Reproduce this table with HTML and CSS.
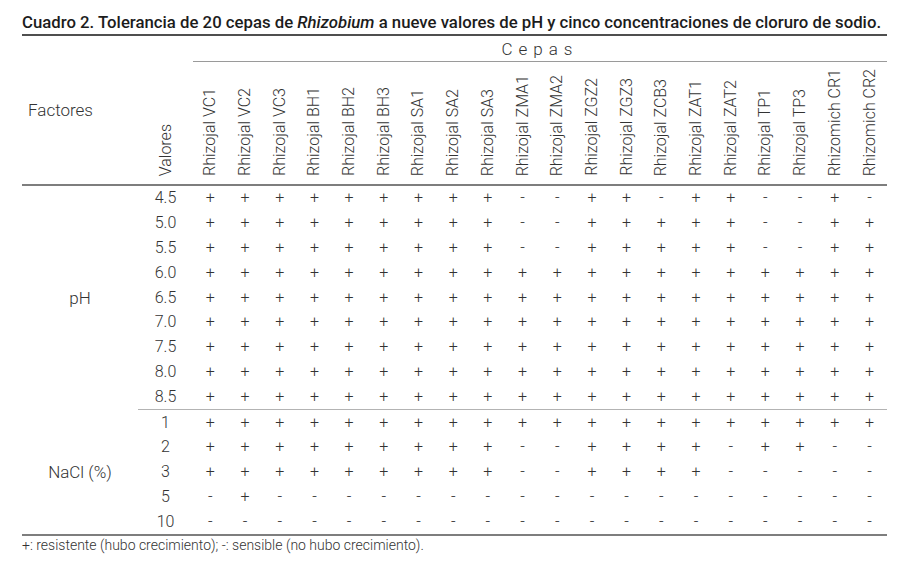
FILE: index.html
```html
<!DOCTYPE html>
<html lang="es">
<head>
<meta charset="utf-8">
<title>Cuadro 2</title>
<link rel="stylesheet" href="styles.css">
</head>
<body>
<div class="wrap">
  <div class="title">Cuadro 2. Tolerancia de 20 cepas de <em>Rhizobium</em> a nueve valores de pH y cinco concentraciones de cloruro de sodio.</div>
  <table class="tbl">
    <colgroup>
      <col class="c-fac"><col class="c-val">
      <col class="c-d"><col class="c-d"><col class="c-d"><col class="c-d"><col class="c-d">
      <col class="c-d"><col class="c-d"><col class="c-d"><col class="c-d"><col class="c-d">
      <col class="c-d"><col class="c-d"><col class="c-d"><col class="c-d"><col class="c-d">
      <col class="c-d"><col class="c-d"><col class="c-d"><col class="c-d"><col class="c-d">
    </colgroup>
    <thead>
      <tr class="h1">
        <th class="factores hb" rowspan="2">Factores</th>
        <th class="hb hv" rowspan="2"><span class="v">Valores</span></th>
        <th class="cepas" colspan="20">Cepas</th>
      </tr>
      <tr class="rot">
        <th class="hb hv"><span class="v">Rhizojal VC1</span></th>
        <th class="hb hv"><span class="v">Rhizojal VC2</span></th>
        <th class="hb hv"><span class="v">Rhizojal VC3</span></th>
        <th class="hb hv"><span class="v">Rhizojal BH1</span></th>
        <th class="hb hv"><span class="v">Rhizojal BH2</span></th>
        <th class="hb hv"><span class="v">Rhizojal BH3</span></th>
        <th class="hb hv"><span class="v">Rhizojal SA1</span></th>
        <th class="hb hv"><span class="v">Rhizojal SA2</span></th>
        <th class="hb hv"><span class="v">Rhizojal SA3</span></th>
        <th class="hb hv"><span class="v">Rhizojal ZMA1</span></th>
        <th class="hb hv"><span class="v">Rhizojal ZMA2</span></th>
        <th class="hb hv"><span class="v">Rhizojal ZGZ2</span></th>
        <th class="hb hv"><span class="v">Rhizojal ZGZ3</span></th>
        <th class="hb hv"><span class="v">Rhizojal ZCB3</span></th>
        <th class="hb hv"><span class="v">Rhizojal ZAT1</span></th>
        <th class="hb hv"><span class="v">Rhizojal ZAT2</span></th>
        <th class="hb hv"><span class="v">Rhizojal TP1</span></th>
        <th class="hb hv"><span class="v">Rhizojal TP3</span></th>
        <th class="hb hv"><span class="v">Rhizomich CR1</span></th>
        <th class="hb hv"><span class="v">Rhizomich CR2</span></th>
      </tr>
    </thead>
    <tbody>
      <tr><td class="fac" rowspan="9">pH</td><td>4.5</td><td>+</td><td>+</td><td>+</td><td>+</td><td>+</td><td>+</td><td>+</td><td>+</td><td>+</td><td>-</td><td>-</td><td>+</td><td>+</td><td>-</td><td>+</td><td>+</td><td>-</td><td>-</td><td>+</td><td>-</td></tr>
      <tr><td>5.0</td><td>+</td><td>+</td><td>+</td><td>+</td><td>+</td><td>+</td><td>+</td><td>+</td><td>+</td><td>-</td><td>-</td><td>+</td><td>+</td><td>+</td><td>+</td><td>+</td><td>-</td><td>-</td><td>+</td><td>+</td></tr>
      <tr><td>5.5</td><td>+</td><td>+</td><td>+</td><td>+</td><td>+</td><td>+</td><td>+</td><td>+</td><td>+</td><td>-</td><td>-</td><td>+</td><td>+</td><td>+</td><td>+</td><td>+</td><td>-</td><td>-</td><td>+</td><td>+</td></tr>
      <tr><td>6.0</td><td>+</td><td>+</td><td>+</td><td>+</td><td>+</td><td>+</td><td>+</td><td>+</td><td>+</td><td>+</td><td>+</td><td>+</td><td>+</td><td>+</td><td>+</td><td>+</td><td>+</td><td>+</td><td>+</td><td>+</td></tr>
      <tr><td>6.5</td><td>+</td><td>+</td><td>+</td><td>+</td><td>+</td><td>+</td><td>+</td><td>+</td><td>+</td><td>+</td><td>+</td><td>+</td><td>+</td><td>+</td><td>+</td><td>+</td><td>+</td><td>+</td><td>+</td><td>+</td></tr>
      <tr><td>7.0</td><td>+</td><td>+</td><td>+</td><td>+</td><td>+</td><td>+</td><td>+</td><td>+</td><td>+</td><td>+</td><td>+</td><td>+</td><td>+</td><td>+</td><td>+</td><td>+</td><td>+</td><td>+</td><td>+</td><td>+</td></tr>
      <tr><td>7.5</td><td>+</td><td>+</td><td>+</td><td>+</td><td>+</td><td>+</td><td>+</td><td>+</td><td>+</td><td>+</td><td>+</td><td>+</td><td>+</td><td>+</td><td>+</td><td>+</td><td>+</td><td>+</td><td>+</td><td>+</td></tr>
      <tr><td>8.0</td><td>+</td><td>+</td><td>+</td><td>+</td><td>+</td><td>+</td><td>+</td><td>+</td><td>+</td><td>+</td><td>+</td><td>+</td><td>+</td><td>+</td><td>+</td><td>+</td><td>+</td><td>+</td><td>+</td><td>+</td></tr>
      <tr><td>8.5</td><td>+</td><td>+</td><td>+</td><td>+</td><td>+</td><td>+</td><td>+</td><td>+</td><td>+</td><td>+</td><td>+</td><td>+</td><td>+</td><td>+</td><td>+</td><td>+</td><td>+</td><td>+</td><td>+</td><td>+</td></tr>
      <tr class="sep"><td class="fac" rowspan="5">NaCl (%)</td><td>1</td><td>+</td><td>+</td><td>+</td><td>+</td><td>+</td><td>+</td><td>+</td><td>+</td><td>+</td><td>+</td><td>+</td><td>+</td><td>+</td><td>+</td><td>+</td><td>+</td><td>+</td><td>+</td><td>+</td><td>+</td></tr>
      <tr><td>2</td><td>+</td><td>+</td><td>+</td><td>+</td><td>+</td><td>+</td><td>+</td><td>+</td><td>+</td><td>-</td><td>-</td><td>+</td><td>+</td><td>+</td><td>+</td><td>-</td><td>+</td><td>+</td><td>-</td><td>-</td></tr>
      <tr><td>3</td><td>+</td><td>+</td><td>+</td><td>+</td><td>+</td><td>+</td><td>+</td><td>+</td><td>+</td><td>-</td><td>-</td><td>+</td><td>+</td><td>+</td><td>+</td><td>-</td><td>-</td><td>-</td><td>-</td><td>-</td></tr>
      <tr><td>5</td><td>-</td><td>+</td><td>-</td><td>-</td><td>-</td><td>-</td><td>-</td><td>-</td><td>-</td><td>-</td><td>-</td><td>-</td><td>-</td><td>-</td><td>-</td><td>-</td><td>-</td><td>-</td><td>-</td><td>-</td></tr>
      <tr class="last"><td>10</td><td>-</td><td>-</td><td>-</td><td>-</td><td>-</td><td>-</td><td>-</td><td>-</td><td>-</td><td>-</td><td>-</td><td>-</td><td>-</td><td>-</td><td>-</td><td>-</td><td>-</td><td>-</td><td>-</td><td>-</td></tr>
    </tbody>
  </table>
  <p class="note">+: resistente (hubo crecimiento); -: sensible (no hubo crecimiento).</p>
</div>
</body>
</html>
```

FILE: styles.css
```css
html, body {
  margin: 0;
  padding: 0;
  background: #ffffff;
}

body {
  font-family: Roboto, "Liberation Sans", sans-serif;
  color: #333333;
}

.wrap {
  padding: 12px 13px 0 22px;
  width: 865px;
}

.title {
  font-size: 16.75px;
  font-weight: 500;
  line-height: 20px;
  color: #1c1c1c;
  padding-bottom: 2px;
  border-bottom: 2px solid #4f4f4f;
  white-space: nowrap;
}

.title em {
  font-style: italic;
}

.tbl {
  width: 865px;
  border-collapse: collapse;
  table-layout: fixed;
}

.c-fac { width: 116px; }
.c-val { width: 55px; }
.c-d { width: 34.7px; }

.tbl th,
.tbl td {
  padding: 0;
  font-weight: 300;
  color: #333333;
}

.h1 th {
  height: 25px;
}

.factores {
  text-align: left;
  padding-left: 6px !important;
  font-size: 17px;
  vertical-align: middle;
}

.cepas {
  font-size: 17px;
  letter-spacing: 6px;
  text-align: center;
  vertical-align: middle;
  border-bottom: 1.5px solid #9a9a9a;
}

.rot th {
  height: 118px;
}

.hv {
  vertical-align: bottom;
  text-align: center;
  padding-bottom: 4px !important;
}

.hb {
  border-bottom: 2px solid #7e7e7e;
}

.v {
  display: inline-block;
  writing-mode: vertical-rl;
  transform: rotate(180deg);
  font-size: 16px;
  line-height: 18px;
  white-space: nowrap;
}

.tbl tbody td {
  height: 24.8px;
  text-align: center;
  vertical-align: middle;
  font-size: 16px;
  line-height: 18px;
}

.tbl tbody td.fac {
  font-size: 17px;
}

.sep td {
  border-top: 1.5px solid #b3b3b3;
}

.sep td.fac {
  border-top: none;
}

.last td,
.tbl tbody td.fac[rowspan="5"] {
  border-bottom: 2px solid #7e7e7e;
}

.note {
  margin: 1px 0 0;
  font-size: 14px;
  font-weight: 300;
  line-height: 17px;
  color: #333333;
}
```
